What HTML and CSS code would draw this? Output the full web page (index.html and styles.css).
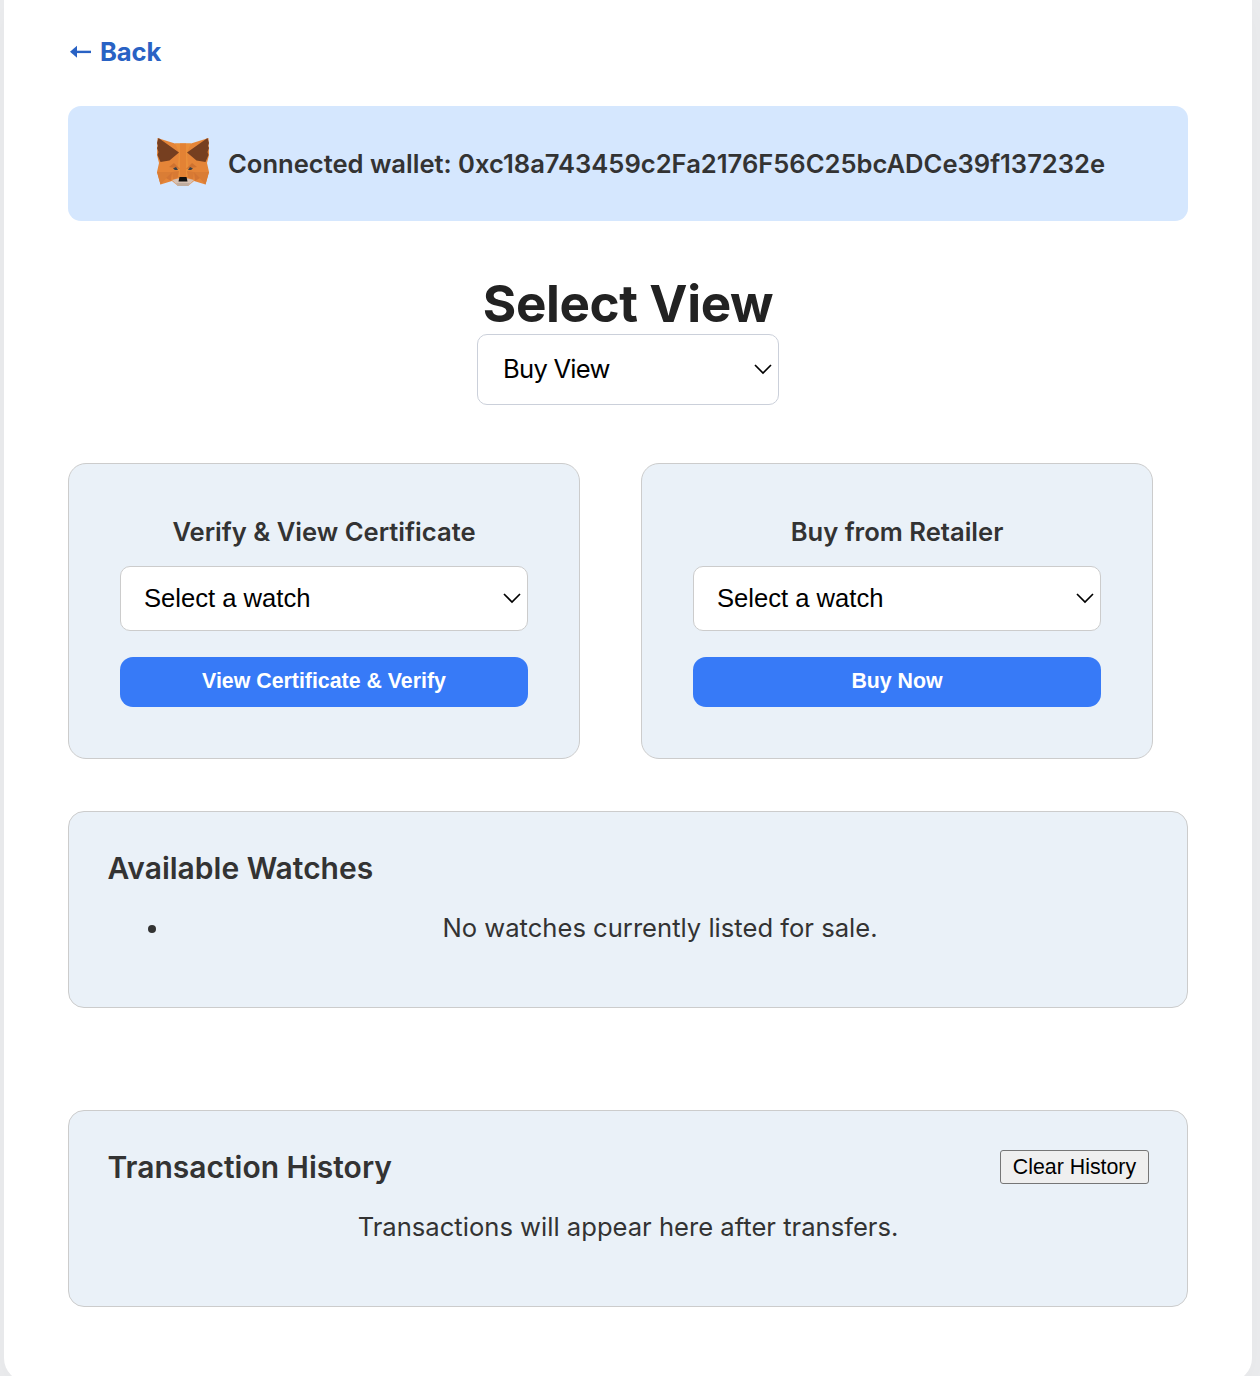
FILE: index.html
```html
<!DOCTYPE html>
<html lang="en">
<head>
<meta charset="utf-8">
<title>Watch Marketplace</title>
<link rel="stylesheet" href="styles.css">
</head>
<body>
<main class="page">
  <a class="back"><svg class="arrow" viewBox="0 0 22 14"><path d="M0 6.8 7 .8v12z"/><path d="M6 5.700h15v2.400H6z"/></svg><span>Back</span></a>
  <section class="wallet">
    <svg class="fox" viewBox="0 0 52 48">
      <path fill="#e58538" d="M.5 0 18 5.500h16L51.500 0l.5 17-2 8 2 9-3.500 12.500L37 43l-6 5H21l-6-5-11.500 3.500L0 34l2-9-2-8z"/>
      <path fill="#ea8f3a" d="M18 5.500h16l-4 9 2 24H20l2-24z"/>
      <path fill="#e38234" d="M23 5.500h6V39h-6z"/>
      <path fill="#da7d35" d="m0 34 15 0L3.500 46.500zM52 34l-15 0 11.500 12.500z"/>
      <path fill="#d27433" d="m15 34-1 9-5-3zM37 34l1 9 5-3z"/>
      <path fill="#cf7230" d="m12 29 5-4 6 6-5-1zM40 29l-5-4-6 6 5-1z"/>
      <path fill="#d87a34" d="m15 34 7-1-1 6-5 3zM37 34l-7-1 1 6 5 3z"/>
      <path fill="#763f20" d="M1.500 0 22 14.500 12.500 22.500 3.500 24 .5 17l1-3L0 10l1-2-1-3zM50.500 0 30 14.500l9.500 8 9 1.500 3-7-1-3 1.500-4-1-2 1-3z"/>
      <path fill="#d7c1b3" d="m15 42 6-1.500h10l6 1.500-6 6H21z"/>
      <path fill="#c0ad9f" d="M19 45h14l-2 3H21z"/>
      <path fill="#11100f" d="M22.500 39h7l1 4.500h-9z"/>
      <path fill="#394047" d="m16 30.500 3-1.500 2 3h-3zM36 30.500l-3-1.500-2 3h3z"/>
    </svg>
    <span class="address">Connected wallet: 0xc18a743459c2Fa2176F56C25bcADCe39f137232e</span>
  </section>
  <section class="view">
    <h1>Select View</h1>
    <div class="select view-select"><span>Buy View</span><svg class="chevron" viewBox="0 0 18 11"><path d="m1 1 8 8 8-8"/></svg></div>
  </section>
  <div class="cards">
    <section class="card">
      <h2>Verify &amp; View Certificate</h2>
      <div class="select"><span>Select a watch</span><svg class="chevron" viewBox="0 0 18 11"><path d="m1 1 8 8 8-8"/></svg></div>
      <button class="primary">View Certificate &amp; Verify</button>
    </section>
    <section class="card">
      <h2>Buy from Retailer</h2>
      <div class="select"><span>Select a watch</span><svg class="chevron" viewBox="0 0 18 11"><path d="m1 1 8 8 8-8"/></svg></div>
      <button class="primary">Buy Now</button>
    </section>
  </div>
  <section class="panel available">
    <h3>Available Watches</h3>
    <ul><li>No watches currently listed for sale.</li></ul>
  </section>
  <section class="panel">
    <div class="panel-head"><h3>Transaction History</h3><button class="clear">Clear History</button></div>
    <p>Transactions will appear here after transfers.</p>
  </section>
</main>
</body>
</html>
```
FILE: styles.css
```css
* { box-sizing: border-box; }
html { background: #ebecee; }
body { margin: 0; height: 1376px; overflow: hidden; color: #333; font: 25.6px/40px Inter, sans-serif; }
h1, h2, h3, p, ul { margin: 0; }
.page { width: 1248px; height: 1382px; margin-left: 4px; padding: 32px 64px 0; background: #fff; border-radius: 0 0 24px 24px; box-shadow: 0 8px 32px rgba(0, 0, 0, .03); }
.back { display: flex; align-items: center; gap: 8px; width: max-content; height: 40px; margin-left: 2px; color: #2962c4; font-weight: 650; letter-spacing: -.1px; }
.arrow { width: 22px; height: 14px; fill: currentColor; }
.wallet { display: flex; align-items: center; height: 115px; margin-top: 34px; padding-left: 89px; background: #d5e7fe; border-radius: 13px; font-weight: 600; }
.fox { width: 52px; height: 48px; margin: -3px 19px 0 0; }
.address { white-space: nowrap; letter-spacing: -.02px; }
.view { display: flex; flex-direction: column; align-items: center; margin-top: 51px; }
h1 { color: #222; font-size: 51.2px; line-height: 62px; font-weight: 700; letter-spacing: -.4px; }
.select { display: flex; align-items: center; justify-content: space-between; height: 65px; padding: 0 6px 0 23px; background: #fff; border: 1px solid #ccc; border-radius: 10px; color: #000; font: 25.6px/30px "Liberation Sans", Arial, sans-serif; }
.select span { padding-bottom: 2px; }
.view-select { width: 302px; height: 71px; padding-left: 25px; border-color: #cbd0da; font-family: Inter, sans-serif; letter-spacing: -.75px; }
.chevron { width: 18px; height: 11px; fill: none; stroke: #000; stroke-width: 1.7; }
.cards { display: flex; gap: 61px; margin-top: 58px; }
.card { display: flex; flex-direction: column; width: 512px; height: 296px; padding: 48px 51px 0; background: #eaf1f8; border: 1px solid #ccc; border-radius: 18px; }
h2 { height: 40px; margin-bottom: 14px; font-size: 25.6px; line-height: 40px; font-weight: 600; text-align: center; }
.primary { height: 50px; margin-top: 26px; padding: 0 0 1px; background: #377af7; border: 0; border-radius: 13px; color: #fff; font: bold 21.33px/25px "Liberation Sans", Arial, sans-serif; }
.panel { height: 197px; margin-top: 102px; padding: 36px 38px 0; background: #eaf1f8; border: 1px solid #ccc; border-radius: 16px; text-align: center; }
.available { margin-top: 52px; }
h3 { padding-left: .5px; font-size: 30px; line-height: 40px; font-weight: 600; text-align: left; }
.panel ul { margin-top: 20px; padding-left: 64px; }
.panel p { margin-top: 20px; }
.panel-head { display: flex; align-items: center; justify-content: space-between; height: 40px; }
.clear { width: 149px; height: 34px; padding: 0; background: #efefef; border: 1px solid #767676; border-radius: 3px; color: #000; font: 21.33px/25px "Liberation Sans", Arial, sans-serif; }
```
